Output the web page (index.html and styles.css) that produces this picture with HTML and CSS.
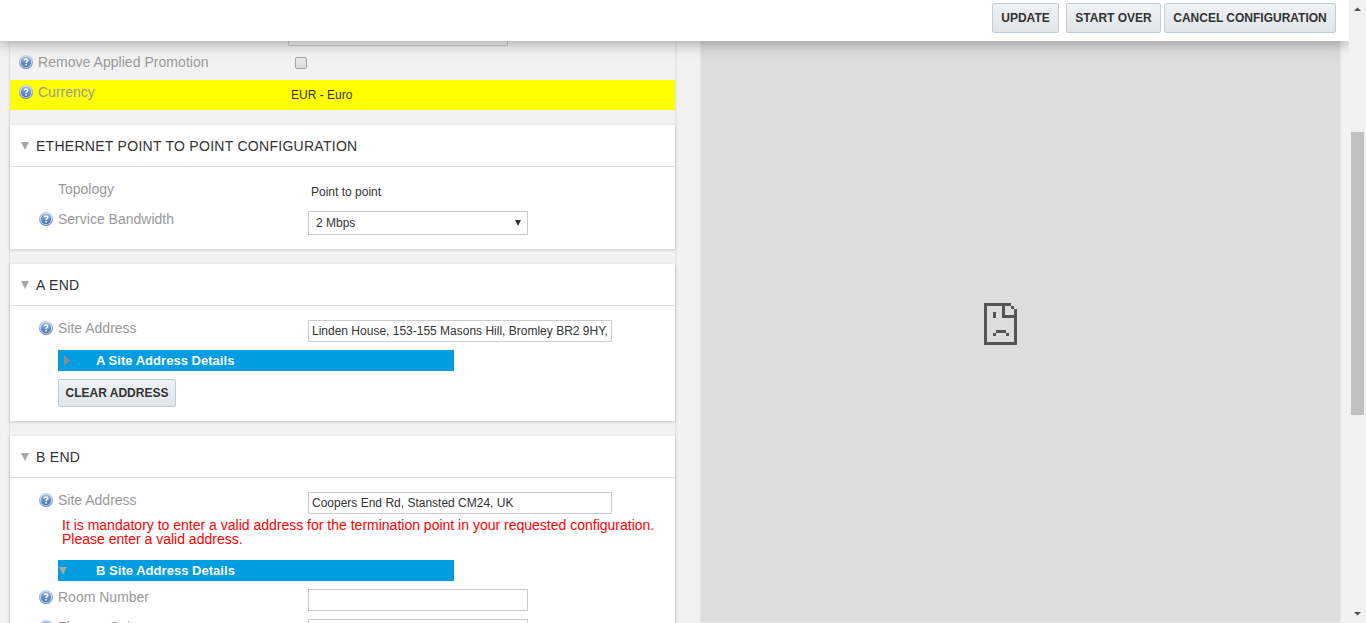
FILE: index.html
```html
<!DOCTYPE html>
<html lang="en">
<head>
<meta charset="utf-8">
<title>Configuration</title>
<link rel="stylesheet" href="styles.css">
</head>
<body>
<svg width="0" height="0" class="defs">
  <defs>
    <linearGradient id="ball" x1="0" y1="0" x2="0" y2="1"><stop offset="0" stop-color="#8fb3e0"/><stop offset="1" stop-color="#4672ad"/></linearGradient>
    <linearGradient id="ring" x1="0" y1="0" x2="0" y2="1"><stop offset="0" stop-color="#c2d5ee"/><stop offset="1" stop-color="#587fb5"/></linearGradient>
    <symbol id="help" viewBox="0 0 14 14">
      <circle cx="7" cy="7" r="7" fill="url(#ring)"/>
      <circle cx="7" cy="7" r="6" fill="#d3e1f2"/>
      <circle cx="7" cy="7" r="5.2" fill="url(#ball)"/>
      <path d="M5.2 5.3C5.3 3.4 8.8 3.4 8.8 5.3C8.8 6.5 7.1 6.5 7.1 8" fill="none" stroke="#fff" stroke-width="1.5"/>
      <rect x="6.300" y="9" width="1.600" height="1.600" fill="#fff"/>
    </symbol>
  </defs>
</svg>
<div class="app">
  <div class="page">
    <header class="toolbar">
      <button class="btn update">UPDATE</button>
      <button class="btn start">START OVER</button>
      <button class="btn cancel">CANCEL CONFIGURATION</button>
    </header>
    <div class="columns">
      <main class="form">
        <div class="cut-row"><div class="cut-field"></div></div>
        <div class="row general"><svg class="help"><use href="#help"/></svg><span class="label promo">Remove Applied Promotion</span><span class="checkbox"></span></div>
        <div class="row general highlight"><svg class="help"><use href="#help"/></svg><span class="label currency">Currency</span><span class="value">EUR - Euro</span></div>

        <section class="panel ethernet">
          <h2><i class="down"></i><span>ETHERNET POINT TO POINT CONFIGURATION</span></h2>
          <div class="body">
            <div class="row"><span class="help"></span><span class="label">Topology</span><span class="value">Point to point</span></div>
            <div class="row"><svg class="help"><use href="#help"/></svg><span class="label">Service Bandwidth</span><div class="select"><span>2 Mbps</span><i></i></div></div>
          </div>
        </section>

        <section class="panel a-end">
          <h2><i class="down"></i><span>A END</span></h2>
          <div class="body">
            <div class="row"><svg class="help"><use href="#help"/></svg><span class="label">Site Address</span><div class="field wide">Linden House, 153-155 Masons Hill, Bromley BR2 9HY,</div></div>
            <div class="bar"><i class="right"></i><span>A Site Address Details</span></div>
            <button class="btn clear">CLEAR ADDRESS</button>
          </div>
        </section>

        <section class="panel b-end">
          <h2><i class="down"></i><span>B END</span></h2>
          <div class="body">
            <div class="row"><svg class="help"><use href="#help"/></svg><span class="label">Site Address</span><div class="field wide">Coopers End Rd, Stansted CM24, UK</div></div>
            <p class="error">It is mandatory to enter a valid address for the termination point in your requested configuration.<br>Please enter a valid address.</p>
            <div class="bar"><i class="down"></i><span>B Site Address Details</span></div>
            <div class="row room"><svg class="help"><use href="#help"/></svg><span class="label">Room Number</span><div class="field"></div></div>
            <div class="row"><svg class="help"><use href="#help"/></svg><span class="label">Floor or Suite</span><div class="field"></div></div>
          </div>
        </section>
      </main>
      <aside class="preview">
        <svg width="33" height="42" viewBox="0 0 33 42" fill="#545454" shape-rendering="crispEdges">
          <path d="M0 0H27V3H3V39H30V6H33V42H0ZM18 3H21V12H30V15H18ZM27 3H30V6H27ZM9 9H12V15H9ZM12 27H22V30H12ZM9 30H12V33H9ZM22 30H25V33H22Z"/>
        </svg>
      </aside>
    </div>
  </div>
  <div class="scrollbar">
    <svg width="17" height="17"><path d="M5 11H12L8.500 7.500Z" fill="#505050"/></svg>
    <div class="thumb"></div>
    <svg class="end" width="17" height="17"><path d="M5 6H12L8.500 9.500Z" fill="#505050"/></svg>
  </div>
</div>
</body>
</html>
```
FILE: styles.css
```css
* { box-sizing: border-box; }
body { margin: 0; overflow: hidden; background: #f2f2f2; font-family: "Liberation Sans", Arial, sans-serif; font-size: 12px; color: #333; }
.defs { position: absolute; }
.app { display: flex; width: 1366px; height: 623px; overflow: hidden; }
.page { width: 1349px; height: 623px; overflow: hidden; }
.toolbar { display: flex; position: relative; z-index: 1; height: 41px; padding: 3px 13px 0 0; justify-content: flex-end; background: #fff; box-shadow: 0 2px 15px rgba(0,0,0,.35); }
.btn { height: 30px; padding: 0; border: 1px solid #c1ced8; border-radius: 2px; background: linear-gradient(#f0f3f4, #e0e5e8); color: #333; font: bold 12px/26px "Liberation Sans", Arial, sans-serif; white-space: nowrap; }
.update { width: 67px; margin-right: 7px; }
.start { width: 95px; margin-right: 3px; }
.cancel { width: 172px; }
.columns { display: flex; height: 582px; }
.form { width: 665px; margin-left: 10px; box-shadow: 0 0 3px rgba(0,0,0,.17); }
.cut-row { height: 9px; padding-left: 278px; }
.cut-field { width: 220px; height: 5px; border: 1px solid #ccc; border-top: 0; }
.row { display: flex; height: 30px; align-items: flex-start; }
.help { flex: none; width: 14px; height: 14px; margin: 8px 5px 0 29px; }
.label { width: 250px; padding-top: 7px; color: #999; font-size: 14px; line-height: 16px; white-space: nowrap; }
.promo { letter-spacing: .04px; }
.value { padding: 11px 0 0 3px; line-height: 15px; }
.general .help { margin: 5px 5px 0 9px; }
.general .label { padding-top: 4px; }
.general .value { padding-top: 8px; }
.highlight { background: #ff0; }
.checkbox { width: 12px; height: 12px; margin: 7px 0 0 7px; border: 1px solid #a3a3a3; border-radius: 2px; background: linear-gradient(#e9e9e9, #dcdcdc); }
.panel { margin-top: 15px; background: #fff; box-shadow: 0 1px 3px rgba(0,0,0,.17); }
.ethernet { height: 124px; }
.a-end { height: 157px; }
.b-end { height: 220px; }
.panel h2 { display: flex; align-items: center; height: 42px; margin: 0; padding-left: 11px; border-bottom: 1px solid #ddd; font-size: 14px; font-weight: normal; letter-spacing: .28px; }
.panel h2 span { margin-left: 7px; padding-top: 1px; }
.down { width: 8px; height: 8px; background: #a7a7a7; clip-path: polygon(0 0, 100% 0, 50% 100%); }
.body { padding-top: 7px; }
.field, .select { width: 220px; height: 22px; margin-top: 7px; padding: 0 3px; border: 1px solid #ccc; background: #fff; line-height: 20px; white-space: nowrap; }
.wide { width: 304px; }
.select { display: flex; height: 24px; align-items: center; justify-content: space-between; padding: 0 6px 0 7px; }
.select i { width: 6px; height: 6px; background: #333; clip-path: polygon(0 0, 100% 0, 50% 100%); }
.bar { display: flex; align-items: center; width: 396px; height: 21px; margin: 7px 0 0 48px; background: #009de0; color: #fff; font-size: 13px; font-weight: bold; letter-spacing: .03px; }
.right { width: 6px; height: 11px; margin: 0 26px 0 6px; background: #8c8c8c; clip-path: polygon(0 0, 100% 50%, 0 100%); }
.panel h2 .down { margin-top: 1px; }
.bar .down { margin: 1px 29px 0 1px; }
.clear { display: block; width: 118px; height: 28px; margin: 8px 0 0 48px; }
.error { height: 28px; margin: 3px 0 0 52px; color: #f00; font-size: 14px; line-height: 14px; white-space: nowrap; }
.error + .bar { margin-top: 14px; }
.room { margin-top: 1px; }
.preview { display: flex; width: 639px; height: 581px; margin-left: 26px; padding: 0 40px 15px 0; align-items: center; justify-content: center; background: #ddd; box-shadow: 0 0 3px rgba(0,0,0,.12); }
.scrollbar { display: flex; flex-direction: column; align-items: center; width: 17px; background: #f1f1f1; }
.scrollbar svg { flex: none; }
.thumb { width: 13px; height: 283px; margin-top: 115px; background: #c1c1c1; }
.end { margin-top: auto; }
```
